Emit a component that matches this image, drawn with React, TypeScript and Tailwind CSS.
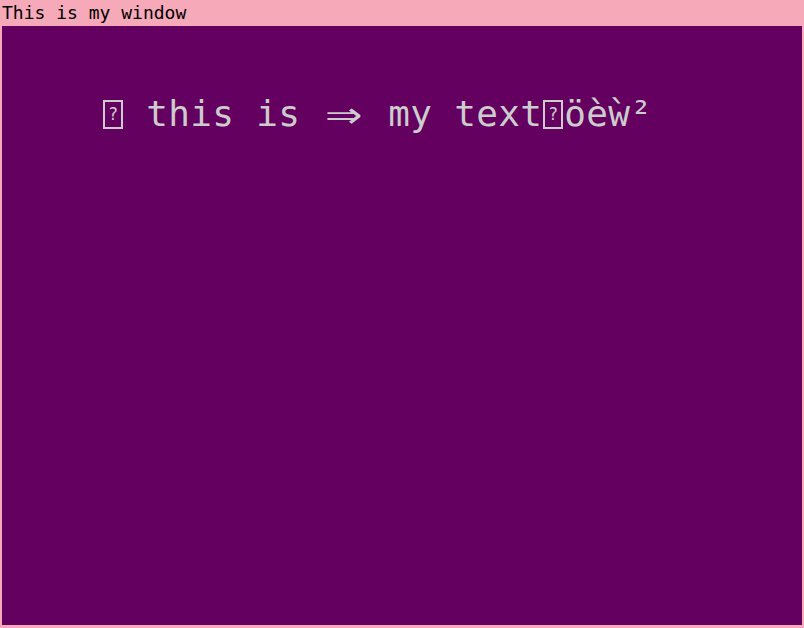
import * as React from "react"

const mono = { fontFamily: '"DejaVu Sans Mono", "Liberation Mono", monospace' }

function Tofu() {
  return (
    <span className="inline-flex h-[36px] w-[22px] items-center justify-start">
      <span className="ml-[1px] flex h-[29px] w-[20px] items-center justify-center border-[2px] border-[#cccccc] text-[17px] leading-none">
        ?
      </span>
    </span>
  )
}

function Cell({ ch }: { ch: string }) {
  return <span className="inline-block w-[22px] text-center">{ch === " " ? "\u00a0" : ch}</span>
}

export default function App() {
  const first = " this is "
  const second = " my text"
  const tail = ["ö", "è", "ẁ", "²"]
  return (
    <div className="flex h-[628px] w-[804px] flex-col bg-[#f6a9b9]" style={mono}>
      <div className="h-[26px] pl-[2px] text-[18px] leading-[26px] text-black">This is my window</div>
      <div className="mx-[2px] h-[599px] bg-[#630060] pl-[100px] pt-[70px]">
        <div className="flex items-center text-[36px] leading-[36px] text-[#cccccc]">
          <Tofu />
          {first.split("").map((c, i) => (
            <Cell key={"a" + i} ch={c} />
          ))}
          <span className="inline-block w-[44px] text-center">
            <span className="inline-block translate-y-[-1px] scale-x-[1.7] scale-y-[1.3]">⇒</span>
          </span>
          {second.split("").map((c, i) => (
            <Cell key={"b" + i} ch={c} />
          ))}
          <Tofu />
          {tail.map((c, i) => (
            <Cell key={"c" + i} ch={c} />
          ))}
        </div>
      </div>
    </div>
  )
}
